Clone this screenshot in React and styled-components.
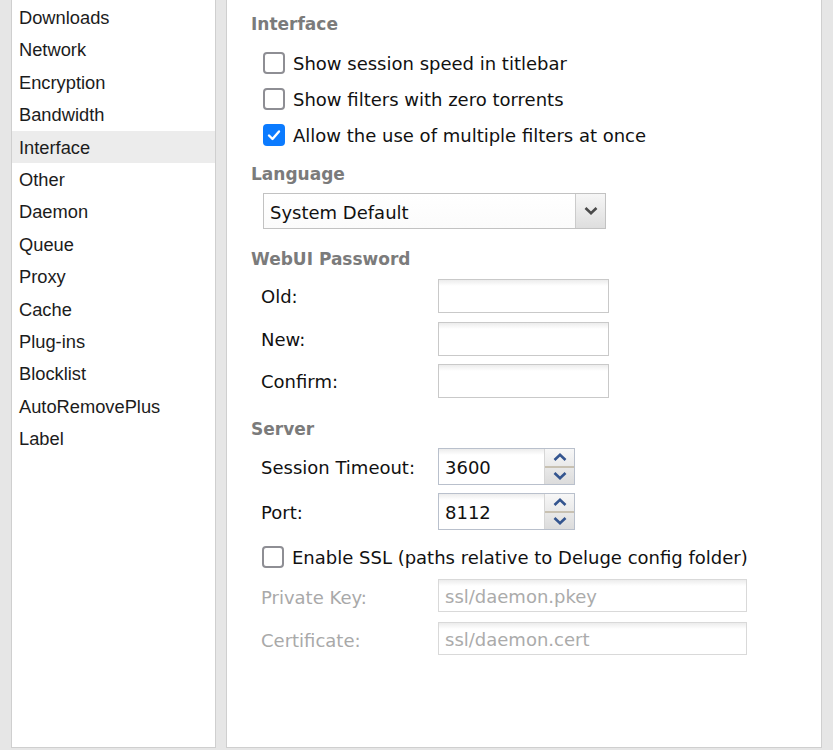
import React from 'react'
import styled, { createGlobalStyle } from 'styled-components'


const GlobalStyle = createGlobalStyle`
  html, body { margin: 0; padding: 0; background: #e6e6e6; }
  body { font-family: "DejaVu Sans", Verdana, sans-serif; }
`

const Page = styled.div`
  display: flex;
  gap: 10px;
  height: 750px;
  padding: 0 11px 2px 11px;
  box-sizing: border-box;
`

const Sidebar = styled.div`
  width: 205px;
  background: #fff;
  border: 1px solid #cfcfcf;
  border-top: none;
  box-sizing: border-box;
  padding-top: 1px;
`

const NavItem = styled.div`
  height: 32.4px;
  line-height: 34px;
  padding-left: 7px;
  font-family: "Liberation Sans", Arial, sans-serif;
  font-size: 18.3px;
  color: #1c1c1c;
  background: ${p => (p.$active ? '#ececec' : 'transparent')};
`

const Main = styled.div`
  flex: 1;
  background: #fff;
  border: 1px solid #cfcfcf;
  border-top: none;
  box-sizing: border-box;
  padding: 11px 0 0 24px;
`

const Heading = styled.div`
  height: 23px;
  padding-top: 1px;
  line-height: 24px;
  margin-top: ${p => p.$top || 0}px;
  font-weight: bold;
  font-size: 17px;
  color: #7b7b7b;
`

const Stack = styled.div`
  display: flex;
  flex-direction: column;
  gap: ${p => p.$gap || 0}px;
  margin-top: ${p => p.$top || 0}px;
  padding-left: ${p => p.$indent || 0}px;
`

const CheckRow = styled.label`
  display: flex;
  align-items: center;
  gap: 8px;
  height: ${p => p.$h || 36}px;
  font-size: 18px;
  color: #111;
`

const Box = styled.span`
  width: 22px;
  height: 22px;
  box-sizing: border-box;
  border-radius: 4px;
  border: ${p => (p.$checked ? 'none' : '2px solid #8e8e94')};
  background: ${p => (p.$checked ? '#0b7bff' : '#fff')};
  display: flex;
  align-items: center;
  justify-content: center;
`

const Select = styled.div`
  display: flex;
  width: 343px;
  height: 36px;
  box-sizing: border-box;
  border: 1px solid #c2c2c2;
  margin-left: 12px;
  margin-top: 8px;
`

const SelectText = styled.div`
  flex: 1;
  padding-left: 6px;
  line-height: 37px;
  font-size: 18px;
  color: #111;
  background: linear-gradient(#fff, #fbfbfb);
`

const SelectButton = styled.div`
  width: 29px;
  border-left: 1px solid #cbcbcb;
  background: linear-gradient(#f6f6f6, #dedede);
  display: flex;
  align-items: center;
  justify-content: center;
`

const FieldRow = styled.div`
  display: grid;
  grid-template-columns: 177px auto;
  align-items: center;
  height: ${p => p.$h}px;
  font-size: 18px;
  color: ${p => (p.$disabled ? '#a9a9a9' : '#111')};
`

const Label = styled.span`
  padding-top: ${p => p.$shift || 1}px;
`

const Input = styled.div`
  width: ${p => p.$w}px;
  height: ${p => p.$h}px;
  box-sizing: border-box;
  border: 1px solid ${p => (p.$disabled ? '#d9d9d9' : '#c9c9c9')};
  background: linear-gradient(#ececec, #fff 6px, #fff);
  padding-left: 6px;
  line-height: ${p => p.$h + 1}px;
  font-size: 18px;
  color: ${p => (p.$disabled ? '#ababab' : '#111')};
`

const Spinner = styled.div`
  display: flex;
  width: 137px;
  height: 37px;
  box-sizing: border-box;
  border: 1px solid #b9c0cc;
`

const SpinnerValue = styled.div`
  flex: 1;
  padding-left: 6px;
  line-height: 37px;
  font-size: 18px;
  color: #111;
  background: linear-gradient(#ececec, #fff 6px, #fff);
  border-right: 1px solid #d6d6d6;
`

const SpinnerButtons = styled.div`
  width: 29px;
  display: flex;
  flex-direction: column;
  background: linear-gradient(#f7f7f7, #dcdcdc);
`

const SpinHalf = styled.div`
  flex: 1;
  display: flex;
  align-items: center;
  justify-content: center;
  border-top: ${p => (p.$lower ? '2px solid #c8c1b2' : 'none')};
`

const Check = () => (
  <svg width="16" height="16" viewBox="0 0 16 16">
    <path d="M3 8.5 L6.5 12 L13 4.5" fill="none" stroke="#fff" strokeWidth="2.4" strokeLinecap="round" strokeLinejoin="round" />
  </svg>
)

const Chevron = ({ up, color = '#34558f', w = 14, h = 8 }) => (
  <svg width={w} height={h} viewBox="0 0 14 8">
    <path d={up ? 'M1.5 7 L7 1.8 L12.5 7' : 'M1.5 1 L7 6.2 L12.5 1'} fill="none" stroke={color} strokeWidth="2.6" strokeLinejoin="miter" />
  </svg>
)

const NAV = ['Downloads', 'Network', 'Encryption', 'Bandwidth', 'Interface', 'Other', 'Daemon',
  'Queue', 'Proxy', 'Cache', 'Plug-ins', 'Blocklist', 'AutoRemovePlus', 'Label']

const OPTIONS = [
  { text: 'Show session speed in titlebar', checked: false },
  { text: 'Show filters with zero torrents', checked: false },
  { text: 'Allow the use of multiple filters at once', checked: true },
]


const NumberField = ({ value }) => (
  <Spinner>
    <SpinnerValue>{value}</SpinnerValue>
    <SpinnerButtons>
      <SpinHalf><Chevron up /></SpinHalf>
      <SpinHalf $lower><Chevron /></SpinHalf>
    </SpinnerButtons>
  </Spinner>
)

const App = () => {
  return (
    <>
      <GlobalStyle />
      <Page>
        <Sidebar>
          {NAV.map(name => (
            <NavItem key={name} $active={name === 'Interface'}>{name}</NavItem>
          ))}
        </Sidebar>
        <Main>
          <Heading>Interface</Heading>
          <Stack $top={10} $indent={12}>
            {OPTIONS.map(o => (
              <CheckRow key={o.text}>
                <Box $checked={o.checked}>{o.checked && <Check />}</Box>
                {o.text}
              </CheckRow>
            ))}
          </Stack>

          <Heading $top={8}>Language</Heading>
          <Select>
            <SelectText>System Default</SelectText>
            <SelectButton><Chevron color="#4a4a4a" /></SelectButton>
          </Select>

          <Heading $top={17}>WebUI Password</Heading>
          <Stack $top={9} $gap={8.5} $indent={10}>
            {['Old:', 'New:', 'Confirm:'].map(l => (
              <FieldRow key={l} $h={34}>
                <Label>{l}</Label>
                <Input $w={171} $h={34} />
              </FieldRow>
            ))}
          </Stack>

          <Heading $top={18}>Server</Heading>
          <Stack $top={8} $gap={8} $indent={10}>
            <FieldRow $h={37}>
              <Label>Session Timeout:</Label>
              <NumberField value="3600" />
            </FieldRow>
            <FieldRow $h={37}>
              <Label>Port:</Label>
              <NumberField value="8112" />
            </FieldRow>
          </Stack>
          <Stack $top={12} $indent={11}>
            <CheckRow $h={30}>
              <Box />
              Enable SSL (paths relative to Deluge config folder)
            </CheckRow>
          </Stack>
          <Stack $top={7} $gap={10} $indent={10}>
            <FieldRow $h={33} $disabled>
              <Label $shift={3}>Private Key:</Label>
              <Input $w={309} $h={33} $disabled>ssl/daemon.pkey</Input>
            </FieldRow>
            <FieldRow $h={33} $disabled>
              <Label $shift={3}>Certificate:</Label>
              <Input $w={309} $h={33} $disabled>ssl/daemon.cert</Input>
            </FieldRow>
          </Stack>
        </Main>
      </Page>
    </>
  )
}

export default App
